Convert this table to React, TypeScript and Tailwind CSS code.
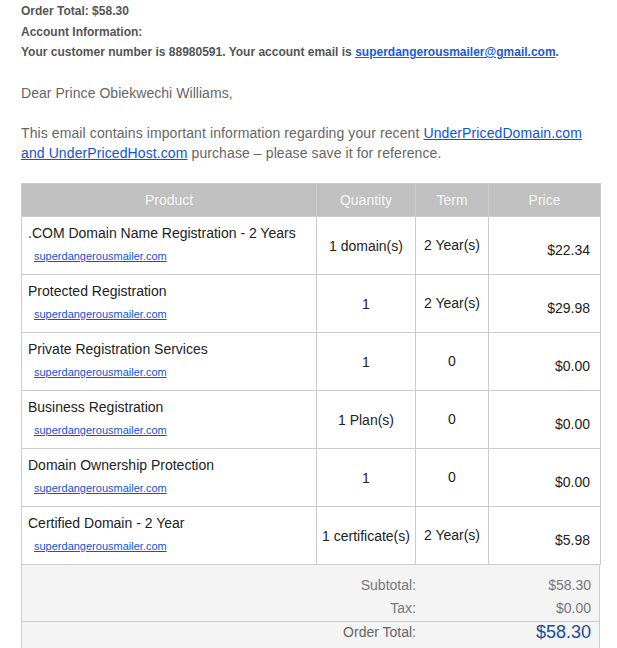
const items = [
  { name: ".COM Domain Name Registration - 2 Years", qty: "1 domain(s)", term: "2 Year(s)", price: "$22.34" },
  { name: "Protected Registration", qty: "1", term: "2 Year(s)", price: "$29.98" },
  { name: "Private Registration Services", qty: "1", term: "0", price: "$0.00" },
  { name: "Business Registration", qty: "1 Plan(s)", term: "0", price: "$0.00" },
  { name: "Domain Ownership Protection", qty: "1", term: "0", price: "$0.00" },
  { name: "Certified Domain - 2 Year", qty: "1 certificate(s)", term: "2 Year(s)", price: "$5.98" },
];

const link = "text-[#1155cc] underline";

export default function App() {
  return (
    <div className="h-[648px] w-[617px] overflow-hidden bg-white font-['Liberation_Sans',Arial,sans-serif]">
      <div className="ml-[21px] w-[579px]">
        <div className="pt-[1px] text-[12px] font-bold leading-[20.5px] text-[#555]">
          <p>Order Total: $58.30</p>
          <p>Account Information:</p>
          <p>
            Your customer number is 88980591. Your account email is{" "}
            <a className="text-[#1a5ad6] underline">superdangerousmailer@gmail.com</a>.
          </p>
        </div>

        <p className="mt-[20px] text-[14px] leading-[20px] tracking-[0.05px] text-[#666]">Dear Prince Obiekwechi Williams,</p>
        <p className="mt-[20px] text-[14px] leading-[20px] tracking-[0.1px] text-[#666]">
          This email contains important information regarding your recent{" "}
          <a className={link}>UnderPricedDomain.com and UnderPricedHost.com</a> purchase – please save it for reference.
        </p>

        <table className="mt-[20px] w-[579px] table-fixed border-collapse text-[14px] text-[#222]">
          <colgroup>
            <col className="w-[295px]" />
            <col className="w-[99px]" />
            <col className="w-[73px]" />
            <col className="w-[112px]" />
          </colgroup>
          <thead>
            <tr className="h-[33px] bg-[#c0c0c0] text-[#f5f5f5]">
              <th className="border border-[#ccc] pt-[2px] font-normal">Product</th>
              <th className="border border-[#ccc] pt-[2px] font-normal">Quantity</th>
              <th className="border border-[#ccc] pt-[2px] font-normal">Term</th>
              <th className="border border-[#ccc] pt-[2px] font-normal">Price</th>
            </tr>
          </thead>
          <tbody>
            {items.map((it) => (
              <tr key={it.name} className="h-[58px]">
                <td className="border border-[#ccc] pt-[7px] pr-[6px] pb-[8px] pl-[6px] align-top">
                  <div className="leading-[18px]">{it.name}</div>
                  <div className="mt-[7px] pl-[6px] text-[11px] leading-[14px]">
                    <a className={link}>superdangerousmailer.com</a>
                  </div>
                </td>
                <td className="border border-[#ccc] pt-[2px] text-center align-middle">{it.qty}</td>
                <td className="border border-[#ccc] text-center align-middle">{it.term}</td>
                <td className="border border-[#ccc] pt-[10px] pr-[10px] text-right align-middle">{it.price}</td>
              </tr>
            ))}
          </tbody>
        </table>

        <div className="border-x border-[#ccc] bg-[#f4f4f4] text-[14px]">
          <div className="pt-[9px] pb-[1px] leading-[23px] text-[#777]">
            <div className="grid grid-cols-[394px_185px]">
              <span className="text-right">Subtotal:</span>
              <span className="pr-[10px] text-right">$58.30</span>
            </div>
            <div className="grid grid-cols-[394px_185px]">
              <span className="text-right">Tax:</span>
              <span className="pr-[10px] text-right">$0.00</span>
            </div>
          </div>
          <div className="grid h-[40px] grid-cols-[394px_185px] border-t border-[#ccc] leading-[21px]">
            <span className="text-right text-[#666]">Order Total:</span>
            <span className="pr-[10px] text-right text-[18px] text-[#1a4c9e]">$58.30</span>
          </div>
        </div>
      </div>
    </div>
  );
}
